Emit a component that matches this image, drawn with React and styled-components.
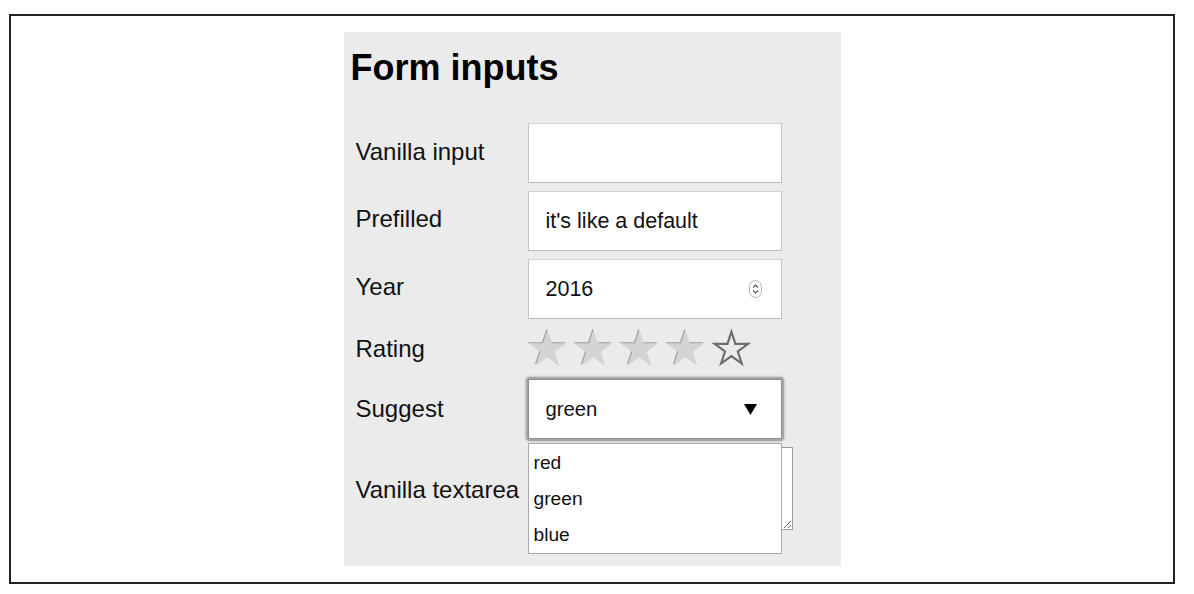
import React from "react";
import styled, { createGlobalStyle } from "styled-components";

const GlobalStyle = createGlobalStyle`
  html, body {
    margin: 0;
    padding: 0;
    background: #ffffff;
    font-family: "Liberation Sans", Arial, sans-serif;
    color: #111;
  }
`;

const Frame = styled.div`
  box-sizing: border-box;
  width: 1166px;
  height: 570px;
  margin: 14px 0 0 9px;
  padding: 16px 0;
  border: 2px solid #222;
  display: flex;
  justify-content: center;
`;

const Panel = styled.div`
  box-sizing: border-box;
  width: 497px;
  background: #ebebeb;
  padding: 18px 0 36px 0;
`;

const Title = styled.h1`
  margin: 0 0 37px 0;
  padding-left: 7px;
  font-size: 36px;
  line-height: 36px;
  font-weight: 700;
  color: #000;
`;

const FormGrid = styled.div`
  display: grid;
  grid-template-columns: 172px 254px;
  grid-auto-rows: auto;
  row-gap: 8px;
  padding-left: 12px;
  align-items: center;
`;

const Label = styled.label`
  font-size: 24px;
  line-height: 24px;
  color: #111;
  white-space: nowrap;
  margin-top: ${(p) => p.nudge || 0}px;
`;

const InputWrap = styled.div`
  position: relative;
  width: 254px;
  height: 60px;
`;

const TextInput = styled.input`
  box-sizing: border-box;
  width: 100%;
  height: 100%;
  margin: 0;
  padding: 0 17px;
  background: #fff;
  border: 1px solid #c4c4c4;
  border-top-color: #d2d2d2;
  border-bottom-color: #bdbdbd;
  border-radius: 0;
  outline: none;
  font-family: "Liberation Sans", Arial, sans-serif;
  font-size: 21.5px;
  color: #111;
`;

const Spinner = styled.svg`
  position: absolute;
  right: 20px;
  top: 21px;
`;

const Stars = styled.div`
  display: flex;
  gap: 7px;
  height: 44px;
  align-items: center;
  padding-bottom: 3px;
  box-sizing: border-box;
`;

const Star = styled.svg`
  display: block;
  filter: ${(p) => (p.filled ? "drop-shadow(-1px -1px 0 rgba(0,0,0,0.32))" : "none")};
`;

const SelectWrap = styled.div`
  position: relative;
  width: 254px;
  height: 60px;
`;

const SelectBox = styled.div`
  box-sizing: border-box;
  width: 100%;
  height: 100%;
  background: #fff;
  border: 1px solid #8c8c8c;
  box-shadow: 0 0 0 2px #a6a6a6, 0 0 2px 3px #c8c8c8;
  border-radius: 2px;
  display: flex;
  align-items: center;
  justify-content: space-between;
  padding: 0 24px 0 17px;
  font-size: 20.3px;
  color: #111;
`;

const OptionList = styled.ul`
  position: absolute;
  top: 64px;
  left: 0;
  z-index: 2;
  box-sizing: border-box;
  width: 254px;
  margin: 0;
  padding: 1px 0 0 0;
  list-style: none;
  background: #fff;
  border: 1px solid #a8a8a8;
`;

const Option = styled.li`
  height: 36px;
  line-height: 36px;
  padding-left: 5px;
  font-size: 19.2px;
  color: #111;
`;

const TextArea = styled.textarea`
  box-sizing: border-box;
  width: 265px;
  height: 83px;
  margin: 0;
  padding: 2px;
  border: 1px solid #9c9c9c;
  border-radius: 0;
  background: #fff;
  resize: both;
  outline: none;
  font-family: "Liberation Sans", Arial, sans-serif;
  font-size: 16px;
`;

const STAR_POINTS =
  "19,0 23.49,13.82 38,13.82 26.27,22.36 30.76,36.18 19,27.64 7.24,36.18 11.73,22.36 0,13.82 14.51,13.82";

const RatingStar = ({ filled }) => (
  <Star filled={filled} width="39" height="37" viewBox="-0.5 -0.5 39 37">
    {filled ? (
      <polygon points={STAR_POINTS} fill="#d4d4d4" />
    ) : (
      <polygon
        points={STAR_POINTS}
        fill="none"
        stroke="#6c6c6c"
        strokeWidth="2.4"
        strokeLinejoin="miter"
        transform="translate(2.2 2.2) scale(0.88)"
      />
    )}
  </Star>
);

const App = () => {
  const rating = 4;
  const options = ["red", "green", "blue"];

  return (
    <>
      <GlobalStyle />
      <Frame>
        <Panel>
          <Title>Form inputs</Title>
          <FormGrid>
            <Label nudge={-2}>Vanilla input</Label>
            <InputWrap>
              <TextInput type="text" defaultValue="" />
            </InputWrap>

            <Label nudge={-4}>Prefilled</Label>
            <InputWrap>
              <TextInput type="text" defaultValue="it's like a default" />
            </InputWrap>

            <Label nudge={-4}>Year</Label>
            <InputWrap>
              <TextInput type="text" defaultValue="2016" />
              <Spinner width="13" height="18" viewBox="0 0 13 18">
                <rect x="0.5" y="0.5" width="12" height="17" rx="6" fill="#fff" stroke="#b4b4b4" />
                <path d="M4 7.5 L6.5 5 L9 7.5" fill="none" stroke="#555" strokeWidth="1.1" />
                <path d="M4 10.5 L6.5 13 L9 10.5" fill="none" stroke="#555" strokeWidth="1.1" />
              </Spinner>
            </InputWrap>

            <Label>Rating</Label>
            <Stars>
              {[1, 2, 3, 4, 5].map((n) => (
                <RatingStar key={n} filled={n <= rating} />
              ))}
            </Stars>

            <Label>Suggest</Label>
            <SelectWrap>
              <SelectBox>
                <span>green</span>
                <svg width="13" height="11" viewBox="0 0 13 11">
                  <polygon points="0,0 13,0 6.5,11" fill="#000" />
                </svg>
              </SelectBox>
              <OptionList>
                {options.map((o) => (
                  <Option key={o}>{o}</Option>
                ))}
              </OptionList>
            </SelectWrap>

            <Label nudge={3}>Vanilla textarea</Label>
            <TextArea />
          </FormGrid>
        </Panel>
      </Frame>
    </>
  );
};

export default App;
